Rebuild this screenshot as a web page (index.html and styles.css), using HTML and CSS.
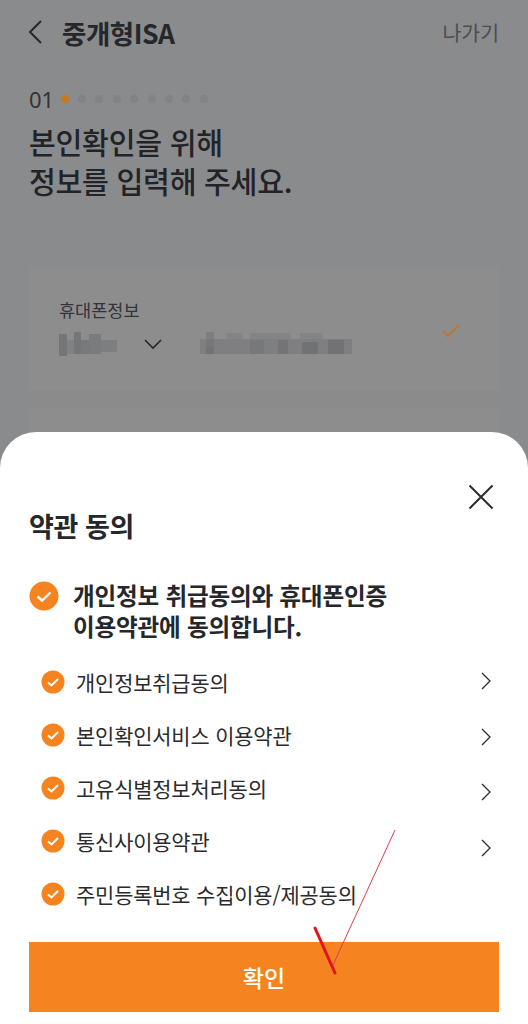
FILE: index.html
```html
<!DOCTYPE html>
<html lang="ko">
<head>
<meta charset="utf-8">
<title>중개형ISA</title>
<link rel="stylesheet" href="styles.css">
</head>
<body>
<div class="screen">
  <main class="page">
    <header class="topbar">
      <svg class="back" width="16" height="26" viewBox="0 0 16 26"><path d="M14 2 3 13l11 11" fill="none" stroke="#262729" stroke-width="2"/></svg>
      <h1 class="page-title">중개형ISA</h1>
      <span class="exit">나가기</span>
    </header>
    <div class="steps">
      <span class="step-num">01</span>
      <span class="dot dot-on"></span>
      <span class="dot"></span><span class="dot"></span><span class="dot"></span><span class="dot"></span>
      <span class="dot"></span><span class="dot"></span><span class="dot"></span><span class="dot"></span>
    </div>
    <h2 class="headline">본인확인을 위해<br>정보를 입력해 주세요.</h2>
    <section class="card">
      <div class="card-label">휴대폰정보</div>
      <div class="card-row">
        <svg class="mosaic mosaic-a" width="60" height="24" viewBox="0 0 60 24">
          <g fill="#6e6f71">
            <rect x="0" y="2" width="8" height="22" opacity=".8"/>
            <rect x="8" y="8" width="7" height="14" opacity=".35"/>
            <rect x="15" y="0" width="7" height="22" opacity=".75"/>
            <rect x="22" y="8" width="8" height="14" opacity=".65"/>
            <rect x="30" y="2" width="12" height="20" opacity=".6"/>
            <rect x="42" y="8" width="16" height="12" opacity=".5"/>
          </g>
        </svg>
        <svg class="chev-down" width="20" height="12" viewBox="0 0 20 12"><path d="M2 2l8 8 8-8" fill="none" stroke="#26272a" stroke-width="1.6"/></svg>
        <svg class="mosaic mosaic-b" width="152" height="24" viewBox="0 0 152 24">
          <g fill="#6e6f71">
            <rect x="6" y="0" width="8" height="22" opacity=".5"/>
            <rect x="0" y="7" width="152" height="15" opacity=".45"/>
            <rect x="26" y="1" width="16" height="6" opacity=".3"/>
            <rect x="50" y="1" width="40" height="6" opacity=".3"/>
            <rect x="100" y="1" width="22" height="6" opacity=".3"/>
            <rect x="50" y="8" width="14" height="14" opacity=".5"/>
            <rect x="78" y="8" width="10" height="14" opacity=".65"/>
            <rect x="102" y="10" width="16" height="12" opacity=".75"/>
            <rect x="128" y="8" width="16" height="14" opacity=".75"/>
            <rect x="6" y="15" width="8" height="7" opacity=".7"/>
          </g>
        </svg>
        <svg class="tick" width="20" height="16" viewBox="0 0 20 16"><path d="M2 8l5 5L18 2" fill="none" stroke="#b87838" stroke-width="2"/></svg>
      </div>
    </section>
    <section class="card card-next"></section>
  </main>

  <aside class="sheet">
    <button class="close" aria-label="닫기">
      <svg width="26" height="26" viewBox="0 0 26 26"><path d="M1.500 1.500l23 23M24.500 1.500l-23 23" stroke="#2a2b2d" stroke-width="2" fill="none"/></svg>
    </button>
    <h3 class="sheet-title">약관 동의</h3>
    <div class="all">
      <svg class="check-lg" width="30" height="30" viewBox="0 0 30 30"><circle cx="15" cy="15" r="14.500" fill="#f58420"/><path d="M8.500 15.500l4.500 4 8.500-8" fill="none" stroke="#fff" stroke-width="2.400"/></svg>
      <p class="all-text">개인정보 취급동의와 휴대폰인증<br>이용약관에 동의합니다.</p>
    </div>
    <div class="terms">
      <ul class="term-list">
        <li class="term"><svg class="check-sm" width="24" height="24" viewBox="0 0 24 24"><circle cx="12" cy="12" r="11.500" fill="#f58420"/><path d="M7 12.500l3.500 3L17 9" fill="none" stroke="#fff" stroke-width="2"/></svg>개인정보취급동의</li>
        <li class="term"><svg class="check-sm" width="24" height="24" viewBox="0 0 24 24"><circle cx="12" cy="12" r="11.500" fill="#f58420"/><path d="M7 12.500l3.500 3L17 9" fill="none" stroke="#fff" stroke-width="2"/></svg>본인확인서비스 이용약관</li>
        <li class="term"><svg class="check-sm" width="24" height="24" viewBox="0 0 24 24"><circle cx="12" cy="12" r="11.500" fill="#f58420"/><path d="M7 12.500l3.500 3L17 9" fill="none" stroke="#fff" stroke-width="2"/></svg>고유식별정보처리동의</li>
        <li class="term"><svg class="check-sm" width="24" height="24" viewBox="0 0 24 24"><circle cx="12" cy="12" r="11.500" fill="#f58420"/><path d="M7 12.500l3.500 3L17 9" fill="none" stroke="#fff" stroke-width="2"/></svg>통신사이용약관</li>
        <li class="term"><svg class="check-sm" width="24" height="24" viewBox="0 0 24 24"><circle cx="12" cy="12" r="11.500" fill="#f58420"/><path d="M7 12.500l3.500 3L17 9" fill="none" stroke="#fff" stroke-width="2"/></svg>주민등록번호 수집이용/제공동의</li>
      </ul>
      <div class="chevrons">
        <svg width="10" height="18" viewBox="0 0 10 18"><path d="M1 1l8 8-8 8" fill="none" stroke="#2a2b2d" stroke-width="1.300"/></svg>
        <svg width="10" height="18" viewBox="0 0 10 18"><path d="M1 1l8 8-8 8" fill="none" stroke="#2a2b2d" stroke-width="1.300"/></svg>
        <svg width="10" height="18" viewBox="0 0 10 18"><path d="M1 1l8 8-8 8" fill="none" stroke="#2a2b2d" stroke-width="1.300"/></svg>
        <svg width="10" height="18" viewBox="0 0 10 18"><path d="M1 1l8 8-8 8" fill="none" stroke="#2a2b2d" stroke-width="1.300"/></svg>
      </div>
    </div>
    <button class="confirm">확인</button>
  </aside>

  <svg class="annotation" width="528" height="1024" viewBox="0 0 528 1024">
    <path d="M395 830 333 965" fill="none" stroke="#d8404a" stroke-width="1"/>
    <path d="M315 928 335 973" fill="none" stroke="#e0141e" stroke-width="3" stroke-linecap="round"/>
  </svg>
</div>
</body>
</html>
```
FILE: styles.css
```css
* { box-sizing: border-box; }
html, body { margin: 0; padding: 0; }
body {
  font-family: "Noto Sans CJK KR", "Noto Sans", sans-serif;
  background: #8a8b8d;
}
.screen {
  position: relative;
  width: 528px;
  height: 1024px;
  overflow: hidden;
  background: #8a8b8d;
}
.page { padding: 0 29px; }
.topbar {
  display: flex;
  align-items: center;
  height: 36px;
  margin-top: 14px;
}
.back { margin: 0 19px 0 -2px; flex: none; }
.page-title {
  margin: 0;
  font-size: 26.500px;
  font-weight: 700;
  color: #26272a;
  letter-spacing: -0.5px;
}
.exit {
  margin-left: auto;
  font-size: 20.500px;
  color: #4d4e50;
}
.steps {
  display: flex;
  align-items: center;
  gap: 9.400px;
  margin-top: 35px;
  height: 28px;
}
.step-num {
  font-size: 22px;
  color: #323336;
  font-family: "Noto Sans", sans-serif;
  margin-right: -3px;
}
.dot {
  flex: none;
  width: 8px;
  height: 8px;
  border-radius: 50%;
  background: #828385;
}
.dot-on { background: #c47a1e; }
.headline {
  margin: 9px 0 0;
  font-size: 29.200px;
  line-height: 39px;
  font-weight: 500;
  color: #222326;
  letter-spacing: -0.3px;
}
.card {
  height: 121px;
  margin-top: 69px;
  padding: 29px 30px 0;
  background: #8d8d8e;
}
.card-label {
  font-size: 17.500px;
  line-height: 24px;
  color: #333437;
}
.card-row {
  display: flex;
  align-items: flex-start;
}
.mosaic { filter: blur(0.7px); }
.mosaic-a { margin-top: 10px; }
.chev-down { margin: 16px 0 0 24px; }
.mosaic-b { margin: 10px 0 0 37px; }
.tick { margin: 1px 8px 0 auto; }
.card-next { margin-top: 19px; height: 40px; padding: 0; }

.sheet {
  position: absolute;
  left: 0;
  right: 0;
  top: 432px;
  bottom: 0;
  padding: 0 29px;
  background: #fff;
  border-radius: 36px 36px 0 0;
}
.close {
  position: absolute;
  top: 52px;
  right: 34px;
  padding: 0;
  border: 0;
  background: none;
  line-height: 0;
}
.sheet-title {
  margin: 0;
  padding-top: 76px;
  font-size: 27px;
  line-height: 36px;
  font-weight: 700;
  color: #26272a;
  letter-spacing: -0.4px;
}
.all {
  display: flex;
  align-items: flex-start;
  margin-top: 36px;
}
.check-lg { flex: none; margin-top: 1px; }
.all-text {
  margin: 0 0 0 14px;
  font-size: 23.600px;
  line-height: 30.500px;
  font-weight: 700;
  color: #26272a;
  letter-spacing: -0.2px;
}
.terms {
  display: flex;
  justify-content: space-between;
  margin-top: 14px;
}
.term-list {
  margin: 0;
  padding: 0 0 0 12px;
  list-style: none;
}
.term {
  display: flex;
  align-items: center;
  height: 53px;
  font-size: 20.900px;
  color: #2a2b2d;
  letter-spacing: -0.15px;
}
.check-sm { flex: none; margin-right: 11px; }
.chevrons {
  display: flex;
  flex-direction: column;
  gap: 37.700px;
  padding-top: 17px;
  margin-right: 8px;
}
.confirm {
  display: block;
  position: absolute;
  left: 29px;
  right: 29px;
  top: 510px;
  height: 70px;
  border: 0;
  background: #f58420;
  color: #fff;
  font: 500 23px "Noto Sans CJK KR", sans-serif;
}
.annotation {
  position: absolute;
  inset: 0;
  pointer-events: none;
}
```
